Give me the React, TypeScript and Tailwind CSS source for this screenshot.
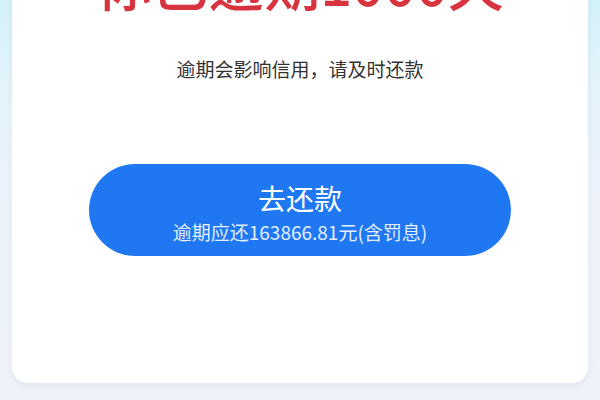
import React from 'react';

const font = { fontFamily: '"Noto Sans CJK SC", "Noto Sans", sans-serif' };

export default function App() {
  return (
    <div
      style={font}
      className="w-full h-[400px] overflow-hidden bg-[linear-gradient(180deg,#d3f1f9_0%,#e4f3fa_22%,#edf2fa_50%,#eff1f8_100%)]"
    >
      <div className="mx-3 -mt-[100px] h-[483px] rounded-b-2xl bg-white shadow-[0_2px_6px_rgba(140,160,200,0.14)] flex flex-col items-center pt-[54px]">
        <h1 className="text-[56px] leading-[56px] font-medium text-[#d8343f] whitespace-nowrap">
          你已逾期1000天
        </h1>
        <p className="mt-[49px] text-[19px] leading-[19px] text-[#333333]">
          逾期会影响信用，请及时还款
        </p>
        <button className="mt-[86px] w-[422px] h-[92px] rounded-full bg-[#1f78f1] flex flex-col items-center pt-[20px]">
          <span className="text-[28px] leading-[28px] text-white">去还款</span>
          <span className="mt-[10px] text-[19px] leading-[19px] text-[#e3eeff]">
            逾期应还163866.81元(含罚息)
          </span>
        </button>
      </div>
    </div>
  );
}
